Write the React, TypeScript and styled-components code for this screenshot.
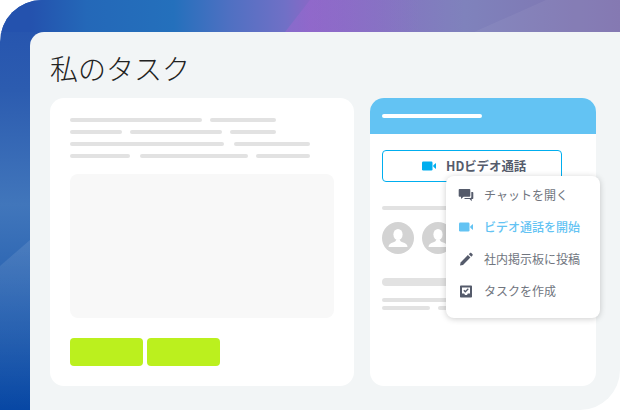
import React from "react";
import styled, { createGlobalStyle } from "styled-components";

const Global = createGlobalStyle`
  html, body { margin: 0; padding: 0; background: #fff; }
  body { font-family: "Noto Sans CJK JP", "Noto Sans", sans-serif; }
  * { box-sizing: border-box; }
`;

const Frame = styled.div`
  position: relative;
  width: 620px;
  height: 410px;
  overflow: hidden;
  background: #fff;
`;

const Backdrop = styled.div`
  width: 620px;
  height: 410px;
  padding: 32px 0 0 30px;
  border-top-left-radius: 42px;
  overflow: hidden;
  position: relative;
  background: linear-gradient(180deg, #2452ae 0%, #2c5cb0 22%, #4176bb 50%, #2a64b2 70%, #0747a4 100%) no-repeat left top / 60px 100%;
`;

const Decor = styled.svg`
  position: absolute;
  left: 0;
  top: 0;
`;

const Sheet = styled.div`
  position: relative;
  height: 378px;
  background: #f2f5f6;
  border-top-left-radius: 14px;
  border-bottom-right-radius: 40px;
  padding: 20px 24px 24px 20px;
  display: flex;
  flex-direction: column;
`;

const Title = styled.h1`
  margin: 0;
  height: 46px;
  font-size: 28px;
  line-height: 32px;
  font-weight: 300;
  color: #222;
`;

const Columns = styled.div`
  display: flex;
  gap: 16px;
  height: 288px;
`;

const LeftCard = styled.section`
  width: 304px;
  background: #fff;
  border-radius: 14px;
  padding: 20px;
`;

const LineRow = styled.div`
  display: flex;
  margin-bottom: 8px;
`;

const Line = styled.span<{ $w: number; $h?: number; $after?: number }>`
  display: block;
  flex: none;
  width: ${(p) => p.$w}px;
  height: ${(p) => p.$h ?? 4}px;
  margin-right: ${(p) => p.$after ?? 0}px;
  border-radius: 2px;
  background: #e2e2e2;
`;

const Preview = styled.div`
  width: 264px;
  height: 144px;
  margin-top: 16px;
  background: #f8f8f8;
  border-radius: 8px;
`;

const Actions = styled.div`
  display: flex;
  gap: 3.5px;
  margin-top: 20px;
`;

const Green = styled.div`
  width: 73px;
  height: 28px;
  border-radius: 4px;
  background: #bbf01e;
`;

const RightCard = styled.section`
  width: 226px;
  background: #fff;
  border-radius: 14px;
  overflow: hidden;
`;

const CardHead = styled.header`
  height: 36px;
  background: #63c3f3;
  padding: 16px 12px 0;
`;

const HeadBar = styled.div`
  width: 100px;
  height: 4px;
  border-radius: 2px;
  background: #fff;
`;

const CardBody = styled.div`
  padding: 16px 12px;
`;

const VideoButton = styled.div`
  width: 180px;
  height: 32px;
  border: 1px solid #00aeef;
  border-radius: 4px;
  display: flex;
  align-items: center;
  padding-left: 38px;
  gap: 9px;
  font-size: 12.4px;
  font-weight: 700;
  color: #555b6b;
`;

const BodyLine = styled(Line)`
  margin-top: 24px;
`;

const Avatars = styled.div`
  display: flex;
  gap: 8px;
  margin-top: 12px;
`;

const Avatar = styled.svg`
  width: 32px;
  height: 32px;
  display: block;
`;

const NameBar = styled(Line)`
  margin-top: 24px;
  border-radius: 4px;
`;

const SubLine = styled(Line)`
  margin-top: 12px;
`;

const SubRow = styled.div`
  display: flex;
  gap: 8px;
  margin-top: 4px;
`;

const Menu = styled.ul`
  position: absolute;
  left: 416px;
  top: 144px;
  width: 154px;
  height: 142px;
  margin: 0;
  padding: 3px 0;
  list-style: none;
  background: #fff;
  border-radius: 8px;
  box-shadow: 0 1px 6px rgba(0, 0, 0, 0.2);
`;

const MenuItem = styled.li<{ $active?: boolean }>`
  height: 32px;
  padding-left: 12px;
  display: flex;
  align-items: center;
  gap: 10px;
  font-size: 12px;
  color: ${(p) => (p.$active ? "#63c3f3" : "#70757e")};
  font-weight: ${(p) => (p.$active ? 500 : 400)};
`;

const MenuLabel = styled.span`
  padding-bottom: 2px;
`;

const IconBox = styled.svg`
  width: 16px;
  height: 16px;
  flex: none;
  display: block;
`;

const VideoIcon = ({ color }: { color: string }) => (
  <IconBox viewBox="0 0 16 16">
    <rect x="1" y="3.500" width="10.500" height="9" rx="1.200" fill={color} />
    <path d="M12.300 7.200 15 5v6l-2.700-2.200z" fill={color} />
  </IconBox>
);

const ChatIcon = () => (
  <IconBox viewBox="0 0 16 16">
    <path d="M1.500 2h10c.4 0 .8.300.8.700v6.300c0 .4-.4.800-.8.800H5.500L3 12V9.800H1.500c-.4 0-.8-.4-.8-.8V2.700c0-.4.400-.7.800-.7z" fill="#555b6b" />
    <path d="M13.300 5h1.300c.4 0 .7.300.7.700v5.600c0 .4-.3.700-.7.700h-.9v2.200L11.600 12H6.500v-.9h6c.4 0 .8-.4.800-.8z" fill="#555b6b" />
  </IconBox>
);

const PencilIcon = () => (
  <IconBox viewBox="0 0 16 16">
    <path d="M2 14.500 2.600 11.400 9.900 4.100 12.400 6.600 5 13.900z" fill="#555b6b" />
    <path d="M10.800 3.200 12 2c.4-.4.900-.4 1.300 0l1.200 1.200c.4.400.4.900 0 1.300l-1.200 1.200z" fill="#555b6b" />
  </IconBox>
);

const TaskIcon = () => (
  <IconBox viewBox="0 0 16 16">
    <path fillRule="evenodd" d="M3 2.500h10c.5 0 1 .4 1 1v10c0 .6-.5 1-1 1H3c-.5 0-1-.4-1-1v-10c0-.6.500-1 1-1zM4 4.500v6h2.200l.8 1.500h2l.8-1.500H12v-6z" fill="#555b6b" />
    <path d="M5.800 7.300 7.300 8.800 10.300 5.800" stroke="#555b6b" strokeWidth="1.300" fill="none" />
  </IconBox>
);

const Person = () => (
  <Avatar viewBox="0 0 32 32">
    <circle cx="16" cy="16" r="16" fill="#d3d3d3" />
    <ellipse cx="16" cy="12.500" rx="4.600" ry="5.600" fill="#fff" />
    <path d="M6.500 25c0-2.800 2-3.800 5-4.800 1.800-.6 2.500-1.200 2.500-2.400h4c0 1.200.7 1.800 2.500 2.400 3 1 5 2 5 4.800z" fill="#fff" />
  </Avatar>
);

const rows: { w: number; after?: number }[][] = [
  [{ w: 132, after: 8 }, { w: 66 }],
  [{ w: 52, after: 8 }, { w: 92, after: 8 }, { w: 46 }],
  [{ w: 154, after: 10 }, { w: 76 }],
  [{ w: 60, after: 10 }, { w: 108, after: 8 }, { w: 54 }],
];

export default function App() {
  return (
    <Frame>
      <Global />
      <Backdrop>
        <Decor width="620" height="410" viewBox="0 0 620 410">
          <defs>
            <linearGradient id="band" x1="0" y1="0" x2="620" y2="0" gradientUnits="userSpaceOnUse">
              <stop offset="0" stopColor="#2452ae" />
              <stop offset="0.05" stopColor="#2452ae" />
              <stop offset="0.14" stopColor="#2468b8" />
              <stop offset="0.28" stopColor="#2470bc" />
              <stop offset="0.37" stopColor="#4f70c2" />
              <stop offset="0.46" stopColor="#7070c6" />
              <stop offset="0.5" stopColor="#8868c6" />
              <stop offset="0.75" stopColor="#7f82bc" />
              <stop offset="1" stopColor="#7f72ae" />
            </linearGradient>
            <linearGradient id="violet" x1="285" y1="0" x2="420" y2="0" gradientUnits="userSpaceOnUse">
              <stop offset="0" stopColor="#9a68d0" stopOpacity="0.55" />
              <stop offset="1" stopColor="#9a68d0" stopOpacity="0" />
            </linearGradient>
            <linearGradient id="lower" x1="0" y1="240" x2="0" y2="410" gradientUnits="userSpaceOnUse">
              <stop offset="0" stopColor="#fff" stopOpacity="0.1" />
              <stop offset="1" stopColor="#fff" stopOpacity="0" />
            </linearGradient>
          </defs>
          <rect x="0" y="0" width="620" height="32" fill="url(#band)" />
          <path d="M285 32 L310 0 L420 0 L420 32 Z" fill="url(#violet)" />
          <path d="M474 32 L546 0 L620 0 L620 32 Z" fill="#fff" opacity="0.05" />
          <path d="M0 266 L30 240 L30 410 L0 410 Z" fill="url(#lower)" />
        </Decor>
        <Sheet>
          <Title>私のタスク</Title>
          <Columns>
            <LeftCard>
              {rows.map((r, i) => (
                <LineRow key={i}>
                  {r.map((l, j) => (
                    <Line key={j} $w={l.w} $after={l.after} />
                  ))}
                </LineRow>
              ))}
              <Preview />
              <Actions>
                <Green />
                <Green />
              </Actions>
            </LeftCard>
            <RightCard>
              <CardHead>
                <HeadBar />
              </CardHead>
              <CardBody>
                <VideoButton>
                  <VideoIcon color="#00aeef" />
                  <span>HDビデオ通話</span>
                </VideoButton>
                <BodyLine $w={120} />
                <Avatars>
                  <Person />
                  <Person />
                </Avatars>
                <NameBar $w={120} $h={8} />
                <SubLine $w={120} />
                <SubRow>
                  <Line $w={48} />
                  <Line $w={40} />
                </SubRow>
              </CardBody>
            </RightCard>
          </Columns>
          <Menu>
            <MenuItem>
              <ChatIcon />
              <MenuLabel>チャットを開く</MenuLabel>
            </MenuItem>
            <MenuItem $active>
              <VideoIcon color="#63c3f3" />
              <MenuLabel>ビデオ通話を開始</MenuLabel>
            </MenuItem>
            <MenuItem>
              <PencilIcon />
              <MenuLabel>社内掲示板に投稿</MenuLabel>
            </MenuItem>
            <MenuItem>
              <TaskIcon />
              <MenuLabel>タスクを作成</MenuLabel>
            </MenuItem>
          </Menu>
        </Sheet>
      </Backdrop>
    </Frame>
  );
}
